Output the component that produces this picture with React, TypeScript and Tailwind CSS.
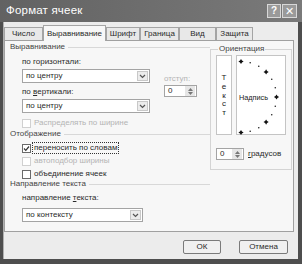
const font = { fontFamily: '"Liberation Sans", Arial, sans-serif' };

function Chevron() {
  return (
    <svg width="7" height="5" viewBox="0 0 7 5">
      <path d="M1 1 L3.5 3.5 L6 1" fill="none" stroke="#555" strokeWidth="1.2" />
    </svg>
  );
}

function Select({ value, width }: { value: string; width: string }) {
  return (
    <div className={`flex h-[14px] items-center border border-[#a4a4a4] bg-white ${width}`}>
      <span className="flex-1 pl-[3px] text-[8px] leading-none text-[#2a2a2a]">{value}</span>
      <span className="mr-px flex h-[10px] w-[11px] items-center justify-center border border-[#c8c8c8] bg-[#ececec]">
        <Chevron />
      </span>
    </div>
  );
}

function Spinner({ width }: { width: string }) {
  return (
    <div className={`flex h-[12px] items-center border border-[#a4a4a4] bg-white ${width}`}>
      <span className="flex-1 pl-[3px] text-[8px] leading-none text-[#2a2a2a]">0</span>
      <span className="mr-px flex h-[10px] w-[10px] flex-col items-center justify-center gap-px bg-[#e6e6e6]">
        <svg width="5" height="3" viewBox="0 0 5 3">
          <path d="M0 3 L2.5 0 L5 3 Z" fill="#777" />
        </svg>
        <svg width="5" height="3" viewBox="0 0 5 3">
          <path d="M0 0 L2.5 3 L5 0 Z" fill="#777" />
        </svg>
      </span>
    </div>
  );
}

function Check({ label, checked, disabled, focus }: { label: string; checked?: boolean; disabled?: boolean; focus?: boolean }) {
  return (
    <div className="flex h-[10px] items-center pl-[12px]">
      <span
        className={`flex h-[9px] w-[9px] items-center justify-center border bg-white ${
          disabled ? 'border-[#d0d0d0]' : 'border-[#6a6a6a]'
        }`}
      >
        {checked && (
          <svg width="7" height="7" viewBox="0 0 7 7">
            <path d="M1 3.5 L2.8 5.3 L6 1.5" fill="none" stroke="#333" strokeWidth="1.2" />
          </svg>
        )}
      </span>
      <span
        className={`ml-[2px] px-px text-[8px] leading-[10px] ${
          disabled ? 'text-[#b4b4b4]' : 'text-[#2a2a2a]'
        } ${focus ? 'outline outline-1 outline-dotted outline-[#333]' : ''}`}
      >
        {label}
      </span>
    </div>
  );
}

function GroupTitle({ label }: { label: string }) {
  return (
    <div className="flex h-[10px] items-center gap-[3px]">
      <span className="text-[8px] leading-[10px] text-[#444]">{label}</span>
      <span className="h-px flex-1 bg-[#d8d8d8]" />
    </div>
  );
}

// dots of the orientation half-circle, big ones every 45 degrees
function Dial() {
  const cx = 4;
  const cy = 41;
  const r = 35.5;
  const dots = [];
  for (let a = -90; a <= 90; a += 15) {
    const rad = (a * Math.PI) / 180;
    const x = cx + r * Math.cos(rad);
    const y = cy - r * Math.sin(rad);
    if (a % 45 === 0) {
      dots.push(
        <path key={a} d={`M${x} ${y - 2.6} L${x + 1} ${y - 1} L${x + 2.6} ${y} L${x + 1} ${y + 1} L${x} ${y + 2.6} L${x - 1} ${y + 1} L${x - 2.6} ${y} L${x - 1} ${y - 1} Z`} fill="#111" />,
      );
    } else {
      dots.push(<circle key={a} cx={x} cy={y} r={0.8} fill="#222" />);
    }
  }
  return (
    <svg width="50" height="80" viewBox="0 0 50 80">
      {dots}
      <text x="2" y="44" fontSize="7.3" fill="#222" fontFamily='"Liberation Sans", Arial, sans-serif'>
        Надпись
      </text>
    </svg>
  );
}

const tabs = ['Число', 'Выравнивание', 'Шрифт', 'Граница', 'Вид', 'Защита'];
const tabWidths = ['w-[39px]', 'w-[63px]', 'w-[34px]', 'w-[39px]', 'w-[37px]', 'w-[37px]'];

export default function App() {
  return (
    <div style={font} className="flex h-[264px] w-[302px] flex-col bg-[#4e4e4e]">
      <div className="flex h-[22px] items-center bg-gradient-to-r from-[#626262] to-[#7a7a7a] pl-[6px] pr-[5px]">
        <span className="flex-1 text-[11.5px] tracking-[0.2px] text-white">Формат ячеек</span>
        <span className="flex h-[14px] w-[14px] items-center justify-center border border-[#d8d8d8] bg-[#9a9a9a] text-[10px] font-bold leading-none text-white">
          ?
        </span>
        <span className="ml-px flex h-[14px] w-[15px] items-center justify-center border border-[#d8d8d8] bg-[#9a9a9a] text-[11px] leading-none text-white">
          ✕
        </span>
      </div>

      <div className="mb-[5px] ml-[3px] mr-[4px] flex flex-1 flex-col border-l border-[#b0b0b0] bg-[#ececec] pr-[4px]">
        <div className="flex h-[18px] items-end">
          {tabs.map((t, i) => (
            <div
              key={t}
              className={`flex items-center justify-center border border-b-0 border-[#a4a4a4] text-[8px] leading-none text-[#2a2a2a] ${tabWidths[i]} ${
                i === 1 ? 'z-10 -mb-px h-[16px] bg-[#f7f7f7]' : 'h-[13px] bg-[#e8e8e8]'
              }`}
            >
              {t}
            </div>
          ))}
        </div>

        <div className="flex h-[192px] border border-[#a0a0a0] bg-[#f7f7f7] pl-[5px] pt-px">
          <div className="flex w-[200px] flex-col">
            <GroupTitle label="Выравнивание" />
            <div className="mt-[5px] flex pl-[12px]">
              <div className="flex w-[128px] flex-col">
                <span className="h-[10px] text-[8px] leading-[10px] text-[#2a2a2a]">по горизонтали:</span>
                <div className="mt-[2px]">
                  <Select value="по центру" width="w-[128px]" />
                </div>
                <span className="mt-[4px] h-[10px] text-[8px] leading-[10px] text-[#2a2a2a]">
                  по <u>в</u>ертикали:
                </span>
                <div className="mt-[2px]">
                  <Select value="по центру" width="w-[128px]" />
                </div>
              </div>
              <div className="ml-[14px] flex flex-col pt-[17px]">
                <span className="h-[10px] text-[8px] leading-[10px] text-[#b4b4b4]">отступ:</span>
                <div className="mt-px">
                  <Spinner width="w-[33px]" />
                </div>
              </div>
            </div>
            <div className="mt-[5px]">
              <Check label="Распределять по ширине" disabled />
            </div>
            <div className="mt-px">
              <GroupTitle label="Отображение" />
            </div>
            <div className="mt-[4px]">
              <Check label="переносить по словам" checked focus />
            </div>
            <div className="mt-[3px]">
              <Check label="автоподбор ширины" disabled />
            </div>
            <div className="mt-[3px]">
              <Check label="объединение ячеек" />
            </div>
            <GroupTitle label="Направление текста" />
            <span className="mt-[4px] h-[10px] pl-[12px] text-[8px] leading-[10px] text-[#2a2a2a]">
              направление <u>т</u>екста:
            </span>
            <div className="mt-[5px] pl-[12px]">
              <Select value="по контексту" width="w-[121px]" />
            </div>
          </div>

          <fieldset className="mt-[2px] h-[126px] w-[78px] border border-[#d4d4d4] px-[5px]">
            <legend className="ml-[2px] px-px text-[8px] leading-[10px] text-[#444]">Ориентация</legend>
            <div className="mt-[1px] flex gap-[4px]">
              <div className="flex h-[80px] w-[16px] flex-col items-center justify-center border border-[#c4c4c4] bg-white pt-[2px] text-[8px] leading-[8.75px] text-[#222]">
                <span>Т</span>
                <span>е</span>
                <span>к</span>
                <span>с</span>
                <span>т</span>
              </div>
              <div className="h-[80px] w-[50px] border border-[#c4c4c4] bg-white">
                <Dial />
              </div>
            </div>
            <div className="mt-[13px] flex items-center">
              <Spinner width="w-[28px]" />
              <span className="ml-[4px] text-[8px] leading-none text-[#2a2a2a]">
                <u>г</u>радусов
              </span>
            </div>
          </fieldset>
        </div>

        <div className="mt-[8px] flex justify-end gap-[18px] pr-[6px]">
          <button className="h-[14px] w-[38px] rounded-[2px] border border-[#7a7a7a] bg-[#f0f0f0] text-[8px] leading-none text-[#2a2a2a]">
            ОК
          </button>
          <button className="h-[14px] w-[49px] rounded-[2px] border border-[#7a7a7a] bg-[#f0f0f0] text-[8px] leading-none text-[#2a2a2a]">
            Отмена
          </button>
        </div>
      </div>
    </div>
  );
}
